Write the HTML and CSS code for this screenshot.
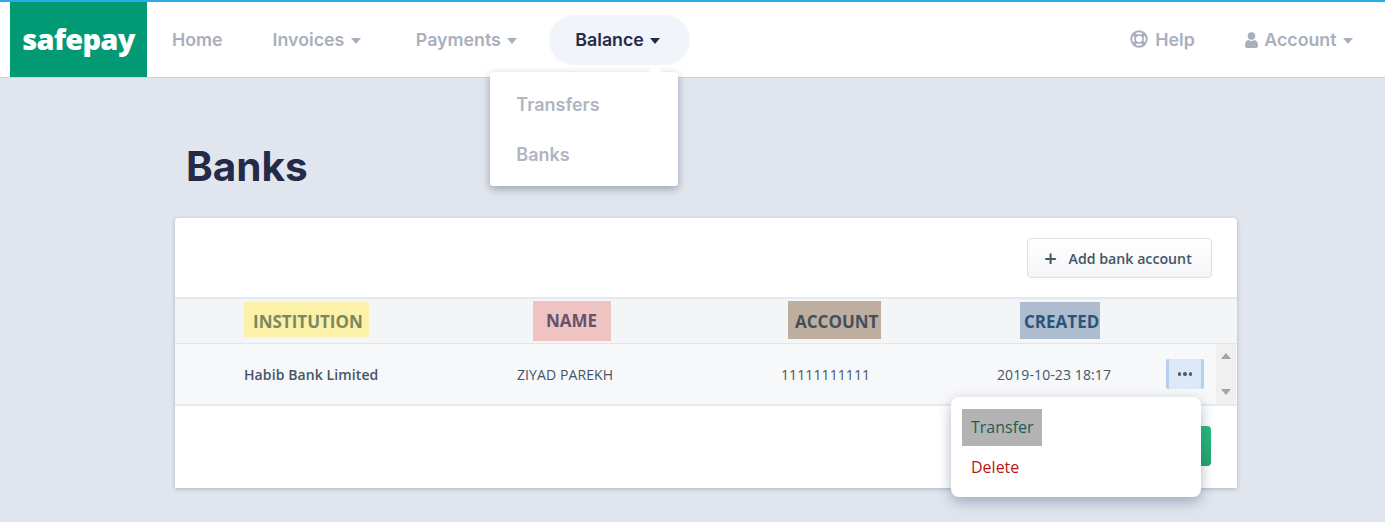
FILE: index.html
```html
<!DOCTYPE html>
<html lang="en">
<head>
  <meta charset="UTF-8" />
  <meta name="viewport" content="width=device-width, initial-scale=1.0"/>
  <title>Banks</title>
  <link rel="stylesheet" href="styles.css">
</head>
<body>
<header class="topbar">
  <a class="logo" href="#">safepay</a>
  <nav class="nav">
    <a class="nav-item" href="#">Home</a>
    <a class="nav-item has-caret" href="#">Invoices <span class="caret"></span></a>
    <a class="nav-item has-caret" href="#">Payments <span class="caret"></span></a>
    <div class="nav-item nav-active">
      Balance <span class="caret"></span>
      <div class="dropdown">
        <span class="dropdown-arrow"></span>
        <a href="#">Transfers</a>
        <a href="#">Banks</a>
      </div>
    </div>
  </nav>
  <nav class="nav nav-right">
    <a class="nav-item nav-help" href="#">
      <svg class="nav-icon" width="18" height="18" viewBox="0 0 18 18" fill="none" stroke="#a9afbd">
        <circle cx="9" cy="9" r="7.8" stroke-width="1.9"/>
        <circle cx="9" cy="9" r="4" stroke-width="1.7"/>
        <path d="M3.6 3.6l2.6 2.6M14.4 3.6l-2.6 2.6M3.6 14.4l2.6-2.6M14.4 14.4l-2.6-2.6" stroke-width="3.4"/>
      </svg>
      Help
    </a>
    <a class="nav-item nav-account" href="#">
      <svg class="nav-icon" width="13" height="16" viewBox="0 0 13 16" fill="#a9afbd">
        <circle cx="6.500" cy="4" r="3.800"/>
        <path d="M0 14c0-4 1.500-6 3.500-6 1 .6 2 .9 3 .9s2-.3 3-.9c2 0 3.500 2 3.500 6 0 1.200-.8 2-2 2H2c-1.200 0-2-.8-2-2z"/>
      </svg>
      Account <span class="caret"></span>
    </a>
  </nav>
</header>

<main class="content">
  <h1 class="title">Banks</h1>
  <section class="card">
    <div class="toolbar">
      <button class="btn-add" type="button"><span class="plus">+</span> Add bank account</button>
    </div>
    <div class="grid grid-head">
      <div><span class="th th-institution">INSTITUTION</span></div>
      <div><span class="th th-name">NAME</span></div>
      <div><span class="th th-account">ACCOUNT</span></div>
      <div><span class="th th-created">CREATED</span></div>
    </div>
    <div class="grid grid-row">
      <div class="cell-bank">Habib Bank Limited</div>
      <div>ZIYAD PAREKH</div>
      <div>11111111111</div>
      <div>2019-10-23 18:17</div>
      <div class="cell-actions">
        <button class="btn-dots" type="button"><span></span><span></span><span></span></button>
        <div class="menu">
          <a class="menu-hover" href="#">Transfer</a>
          <a class="menu-delete" href="#">Delete</a>
        </div>
      </div>
      <div class="scroll">
        <span class="scroll-up"></span>
        <span class="scroll-down"></span>
      </div>
    </div>
    <div class="card-foot">
      <button class="btn-green" type="button">Close</button>
    </div>
  </section>
</main>
</body>
</html>
```

FILE: styles.css
```css
* {
  margin: 0;
  padding: 0;
  box-sizing: border-box;
}

html, body {
  height: 522px;
  overflow: hidden;
}

body {
  font-family: Inter, "Liberation Sans", sans-serif;
  background: #e1e6ee;
  color: #252a48;
}

a {
  text-decoration: none;
  color: inherit;
}

.topbar {
  display: flex;
  height: 78px;
  padding-left: 10px;
  background: #fff;
  border-top: 2px solid #29abe9;
  border-bottom: 1px solid #cfd3db;
}

.logo {
  width: 137px;
  height: 75px;
  background: #019a75;
  color: #fff;
  font-family: "Noto Sans", sans-serif;
  font-weight: 900;
  font-size: 29px;
  line-height: 73px;
  text-align: center;
  letter-spacing: -0.7px;
}

.nav {
  display: flex;
  align-items: center;
  height: 75px;
}

.nav-right {
  margin-left: auto;
}

.nav-item {
  position: relative;
  display: block;
  height: 50px;
  padding: 0 25px;
  line-height: 50px;
  font-size: 17.8px;
  font-weight: 600;
  color: #a9afbd;
  white-space: nowrap;
}

.has-caret {
  margin-right: 5px;
}

.nav-active {
  margin-left: 2px;
  padding: 0 30px 0 26px;
  border-radius: 25px;
  background: #f1f4fa;
  color: #252a48;
}

.nav-account {
  padding: 0 32px 0 25px;
}

.nav-icon {
  vertical-align: -2px;
  margin-right: 2px;
}

.nav-help .nav-icon {
  margin-right: 3px;
}

.caret {
  display: inline-block;
  width: 0;
  height: 0;
  margin-left: 2px;
  vertical-align: 2px;
  border-left: 5px solid transparent;
  border-right: 5px solid transparent;
  border-top: 6px solid currentColor;
}

.dropdown {
  position: absolute;
  z-index: 5;
  left: -59px;
  top: 57px;
  width: 188px;
  height: 114px;
  padding-top: 8px;
  background: #fff;
  border-radius: 3px;
  box-shadow: 0 3px 8px rgba(50, 60, 90, 0.4);
}

.dropdown a {
  display: block;
  height: 50px;
  padding-left: 26px;
  font-size: 18px;
  line-height: 50px;
  color: #b1b5c2;
}

.dropdown-arrow {
  position: absolute;
  top: -5px;
  left: 160px;
  width: 10px;
  height: 10px;
  background: #fff;
  transform: rotate(45deg);
}

.content {
  padding: 0 148px 0 175px;
}

.title {
  margin: 63px 0 25px 11px;
  font-size: 40.500px;
  line-height: 52px;
  font-weight: 700;
  color: #252a48;
}

.card {
  position: relative;
  height: 270px;
  background: #fff;
  border-radius: 4px 4px 0 0;
  box-shadow: 0 1px 4px rgba(50, 60, 90, 0.3);
  font-family: "Open Sans", sans-serif;
  color: #445565;
}

.toolbar {
  display: flex;
  justify-content: flex-end;
  height: 79px;
  padding: 20px 25px 0 0;
}

.btn-add {
  width: 185px;
  height: 40px;
  font-family: inherit;
  font-size: 14.200px;
  font-weight: 600;
  color: #445565;
  background: linear-gradient(#fff, #f3f5f8);
  border: 1px solid #dcdfe6;
  border-radius: 4px;
}

.plus {
  margin-left: -3px;
  margin-right: 8px;
  font-size: 22px;
  font-weight: 600;
  line-height: 14px;
  vertical-align: -2px;
}

.grid {
  display: grid;
  grid-template-columns: 69px 273px 264px 216px 169px 50px 20px 1px;
  align-items: center;
}

.grid > div:first-child {
  grid-column: 2;
}

.grid-head {
  height: 47px;
  padding-bottom: 1px;
  background: #f3f5f7;
  border-top: 2px solid #e4e8ef;
  border-bottom: 1px solid #e2e5ea;
}

.th {
  display: inline-block;
  height: 35px;
  font-size: 17px;
  font-weight: 700;
  line-height: 38px;
}

.th-institution {
  margin-top: -2px;
  line-height: 40px;
  padding: 0 6px 0 9px;
  background: #fbf1a9;
  color: #7b8860;
}

.th-name {
  margin-left: 16px;
  height: 40px;
  line-height: 40px;
  padding: 0 14px 0 13px;
  background: #f0c3c3;
  color: #66536a;
}

.th-account {
  margin-left: 7px;
  margin-top: -2px;
  height: 38px;
  line-height: 42px;
  padding: 0 3px 0 7px;
  background: #bdaea0;
  color: #43505a;
}

.th-created {
  margin-left: 23px;
  height: 37px;
  line-height: 39px;
  padding: 0 1px 0 4px;
  background: #adbccf;
  color: #2d5478;
}

.grid-row {
  height: 62px;
  background: #f7f8f9;
  border-bottom: 2px solid #e6e9ee;
  font-size: 14px;
  letter-spacing: 0.1px;
}

.cell-bank {
  font-weight: 600;
}

.cell-actions {
  position: relative;
}

.btn-dots {
  display: flex;
  align-items: center;
  justify-content: center;
  gap: 2px;
  width: 38px;
  height: 30px;
  background: #dde9f6;
  border: none;
  border-left: 3px solid #b4d0ee;
  border-right: 3px solid #b4d0ee;
  border-radius: 2px;
}

.btn-dots span {
  width: 3.500px;
  height: 3.500px;
  border-radius: 50%;
  background: #4d5c6d;
}

.scroll {
  align-self: stretch;
  display: flex;
  flex-direction: column;
  justify-content: space-between;
  align-items: center;
  padding: 9px 0;
  background: #f0f0f0;
}

.scroll-up,
.scroll-down {
  width: 0;
  height: 0;
  border-left: 5px solid transparent;
  border-right: 5px solid transparent;
}

.scroll-up {
  border-bottom: 6px solid #a3a3a3;
}

.scroll-down {
  border-top: 6px solid #a3a3a3;
}

.menu {
  position: absolute;
  z-index: 4;
  top: 38px;
  left: -215px;
  width: 250px;
  height: 100px;
  padding: 12px 11px;
  background: #fff;
  border-radius: 8px;
  box-shadow: 0 5px 14px rgba(60, 80, 110, 0.4);
  font-size: 16px;
  letter-spacing: 0;
}

.menu a {
  display: block;
  width: 80px;
  height: 37px;
  padding-left: 9px;
  line-height: 37px;
}

.menu-hover {
  background: #b3b3b3;
  color: #1f5c55;
}

.menu .menu-delete {
  margin-top: 3px;
  color: #bd1414;
}

.card-foot {
  display: flex;
  justify-content: flex-end;
  padding: 20px 26px 0 0;
}

.btn-green {
  width: 120px;
  height: 40px;
  font-family: inherit;
  color: #fff;
  background: linear-gradient(#23bd7b, #22a36c);
  border: none;
  border-radius: 4px;
}
```
